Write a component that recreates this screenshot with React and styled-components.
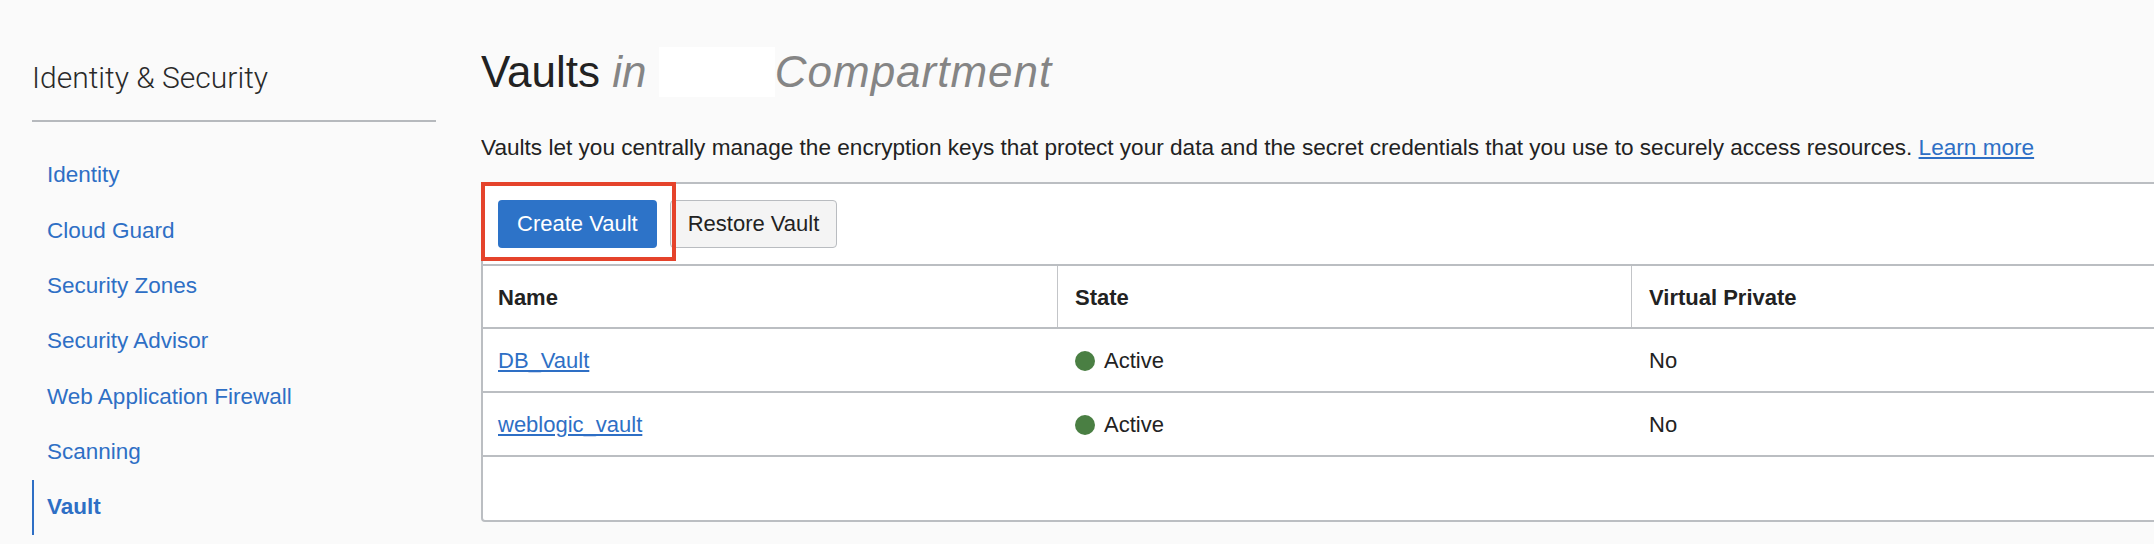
import React from "react";
import styled, { createGlobalStyle } from "styled-components";

const BLUE = "#2e6fc5";
const LINE = "#bbbec2";

const GlobalStyle = createGlobalStyle`
  html, body {
    margin: 0;
    padding: 0;
    background: #fafafa;
    overflow: hidden;
  }
  body {
    font-family: "Liberation Sans", Arial, sans-serif;
    color: #222;
  }
`;

const NAV = [
  "Identity",
  "Cloud Guard",
  "Security Zones",
  "Security Advisor",
  "Web Application Firewall",
  "Scanning",
  "Vault",
];

const VAULTS = [
  { name: "DB_Vault", state: "Active", virtualPrivate: "No" },
  { name: "weblogic_vault", state: "Active", virtualPrivate: "No" },
];

const Sidebar = () =>
  <SideColumn>
    <SideTitle>Identity &amp; Security</SideTitle>
    <NavList>
      {NAV.map(label =>
        <NavItem key={label} active={label === "Vault"}>
          <NavLink active={label === "Vault"}>{label}</NavLink>
        </NavItem>
      )}
    </NavList>
  </SideColumn>

const VaultRow = ({ vault }) =>
  <BodyRow>
    <Cell first>
      <RowLink href="#">{vault.name}</RowLink>
    </Cell>
    <Cell>
      <StatusDot />
      {vault.state}
    </Cell>
    <Cell>{vault.virtualPrivate}</Cell>
  </BodyRow>

export default function App() {
  return (
    <Page>
      <GlobalStyle />
      <Sidebar />
      <Main>
        <Title>
          Vaults <Muted>in </Muted><Redacted /><Muted wide>Compartment</Muted>
        </Title>
        <Intro>
          Vaults let you centrally manage the encryption keys that protect your data and the
          secret credentials that you use to securely access resources.{" "}
          <IntroLink href="#">Learn more</IntroLink>
        </Intro>
        <TableCard>
          <Highlight />
          <Toolbar>
            <Button primary>Create Vault</Button>
            <Button>Restore Vault</Button>
          </Toolbar>
          <HeadRow>
            <HeadCell first>Name</HeadCell>
            <HeadCell>State</HeadCell>
            <HeadCell>Virtual Private</HeadCell>
          </HeadRow>
          {VAULTS.map(v => <VaultRow key={v.name} vault={v} />)}
          <EmptyRow />
        </TableCard>
      </Main>
    </Page>
  );
}

const Page = styled.div`
  display: flex;
  width: 100vw;
  height: 544px;
  overflow: hidden;
`;

const SideColumn = styled.nav`
  flex-shrink: 0;
  width: 404px;
  margin-left: 32px;
  padding-top: 60px;
`;

const SideTitle = styled.div`
  font-family: Roboto, "Liberation Sans", sans-serif;
  font-weight: 300;
  font-size: 30px;
  line-height: 36px;
  color: #2a2a2a;
  padding-bottom: 24px;
  border-bottom: 2px solid #b6b9bd;
`;

const NavList = styled.ul`
  list-style: none;
  margin: 26px 0 0;
  padding: 0;
`;

const NavItem = styled.li`
  display: flex;
  align-items: center;
  height: 55.3px;
  padding-left: 13px;
  border-left: 2px solid ${props => props.active ? BLUE : "transparent"};
`;

const NavLink = styled.a`
  font-size: 22.5px;
  line-height: 1;
  color: ${BLUE};
  font-weight: ${props => props.active ? 700 : 400};
  text-decoration: none;
  cursor: pointer;
`;

const Main = styled.main`
  flex: 1;
  min-width: 0;
  margin-left: 45px;
  padding-top: 46px;
  overflow: hidden;
`;

const Title = styled.h1`
  margin: 0;
  font-size: 44px;
  line-height: 52px;
  font-weight: 400;
  color: #222;
  white-space: nowrap;
`;

const Muted = styled.em`
  color: #858585;
  font-style: italic;
  letter-spacing: ${props => props.wide ? "1px" : "0"};
`;

const Redacted = styled.span`
  display: inline-block;
  vertical-align: top;
  width: 116px;
  height: 50px;
  margin-top: 1px;
  background: #fff;
`;

const Intro = styled.p`
  margin: 35px 0 0;
  font-size: 22.6px;
  line-height: 30px;
  color: #222;
  white-space: nowrap;
`;

const IntroLink = styled.a`
  color: ${BLUE};
  text-decoration: underline;
`;

const TableCard = styled.div`
  position: relative;
  width: 1900px;
  margin-top: 19px;
  background: #fff;
  border: 2px solid ${LINE};
  border-radius: 3px 0 0 4px;
`;

const Highlight = styled.div`
  position: absolute;
  left: -2px;
  top: -2px;
  width: 195px;
  height: 79px;
  box-sizing: border-box;
  border: 4px solid #e5432b;
  pointer-events: none;
`;

const Toolbar = styled.div`
  display: flex;
  gap: 13px;
  padding: 16px 15px;
`;

const Button = styled.button`
  height: 48px;
  padding: 0 ${props => props.primary ? "19px" : "17px"};
  border-radius: 4px;
  font-family: "Liberation Sans", Arial, sans-serif;
  font-size: 22px;
  cursor: pointer;
  color: ${props => props.primary ? "#fff" : "#222"};
  background: ${props => props.primary ? "#2d73c8" : "#f4f4f4"};
  border: ${props => props.primary ? "none" : "1.5px solid #b9bcc0"};
`;

const HeadRow = styled.div`
  display: grid;
  grid-template-columns: 574px 574px 1fr;
  height: 61px;
  border-top: 2px solid ${LINE};
  border-bottom: 2px solid ${LINE};
`;

const HeadCell = styled.div`
  display: flex;
  align-items: center;
  padding: 2px 0 0 ${props => props.first ? "15px" : "17px"};
  border-left: ${props => props.first ? "none" : "1px solid #c3c5c8"};
  font-size: 22px;
  font-weight: 700;
  color: #222;
`;

const BodyRow = styled.div`
  display: grid;
  grid-template-columns: 574px 574px 1fr;
  height: 62px;
  border-bottom: 2px solid ${LINE};
`;

const Cell = styled.div`
  display: flex;
  align-items: center;
  padding: 2px 0 0 ${props => props.first ? "15px" : "18px"};
  font-size: 22px;
  color: #222;
`;

const RowLink = styled.a`
  color: ${BLUE};
  text-decoration: underline;
`;

const StatusDot = styled.span`
  width: 20px;
  height: 20px;
  margin-right: 9px;
  border-radius: 50%;
  background: #4a7f43;
`;

const EmptyRow = styled.div`
  height: 63px;
`;
